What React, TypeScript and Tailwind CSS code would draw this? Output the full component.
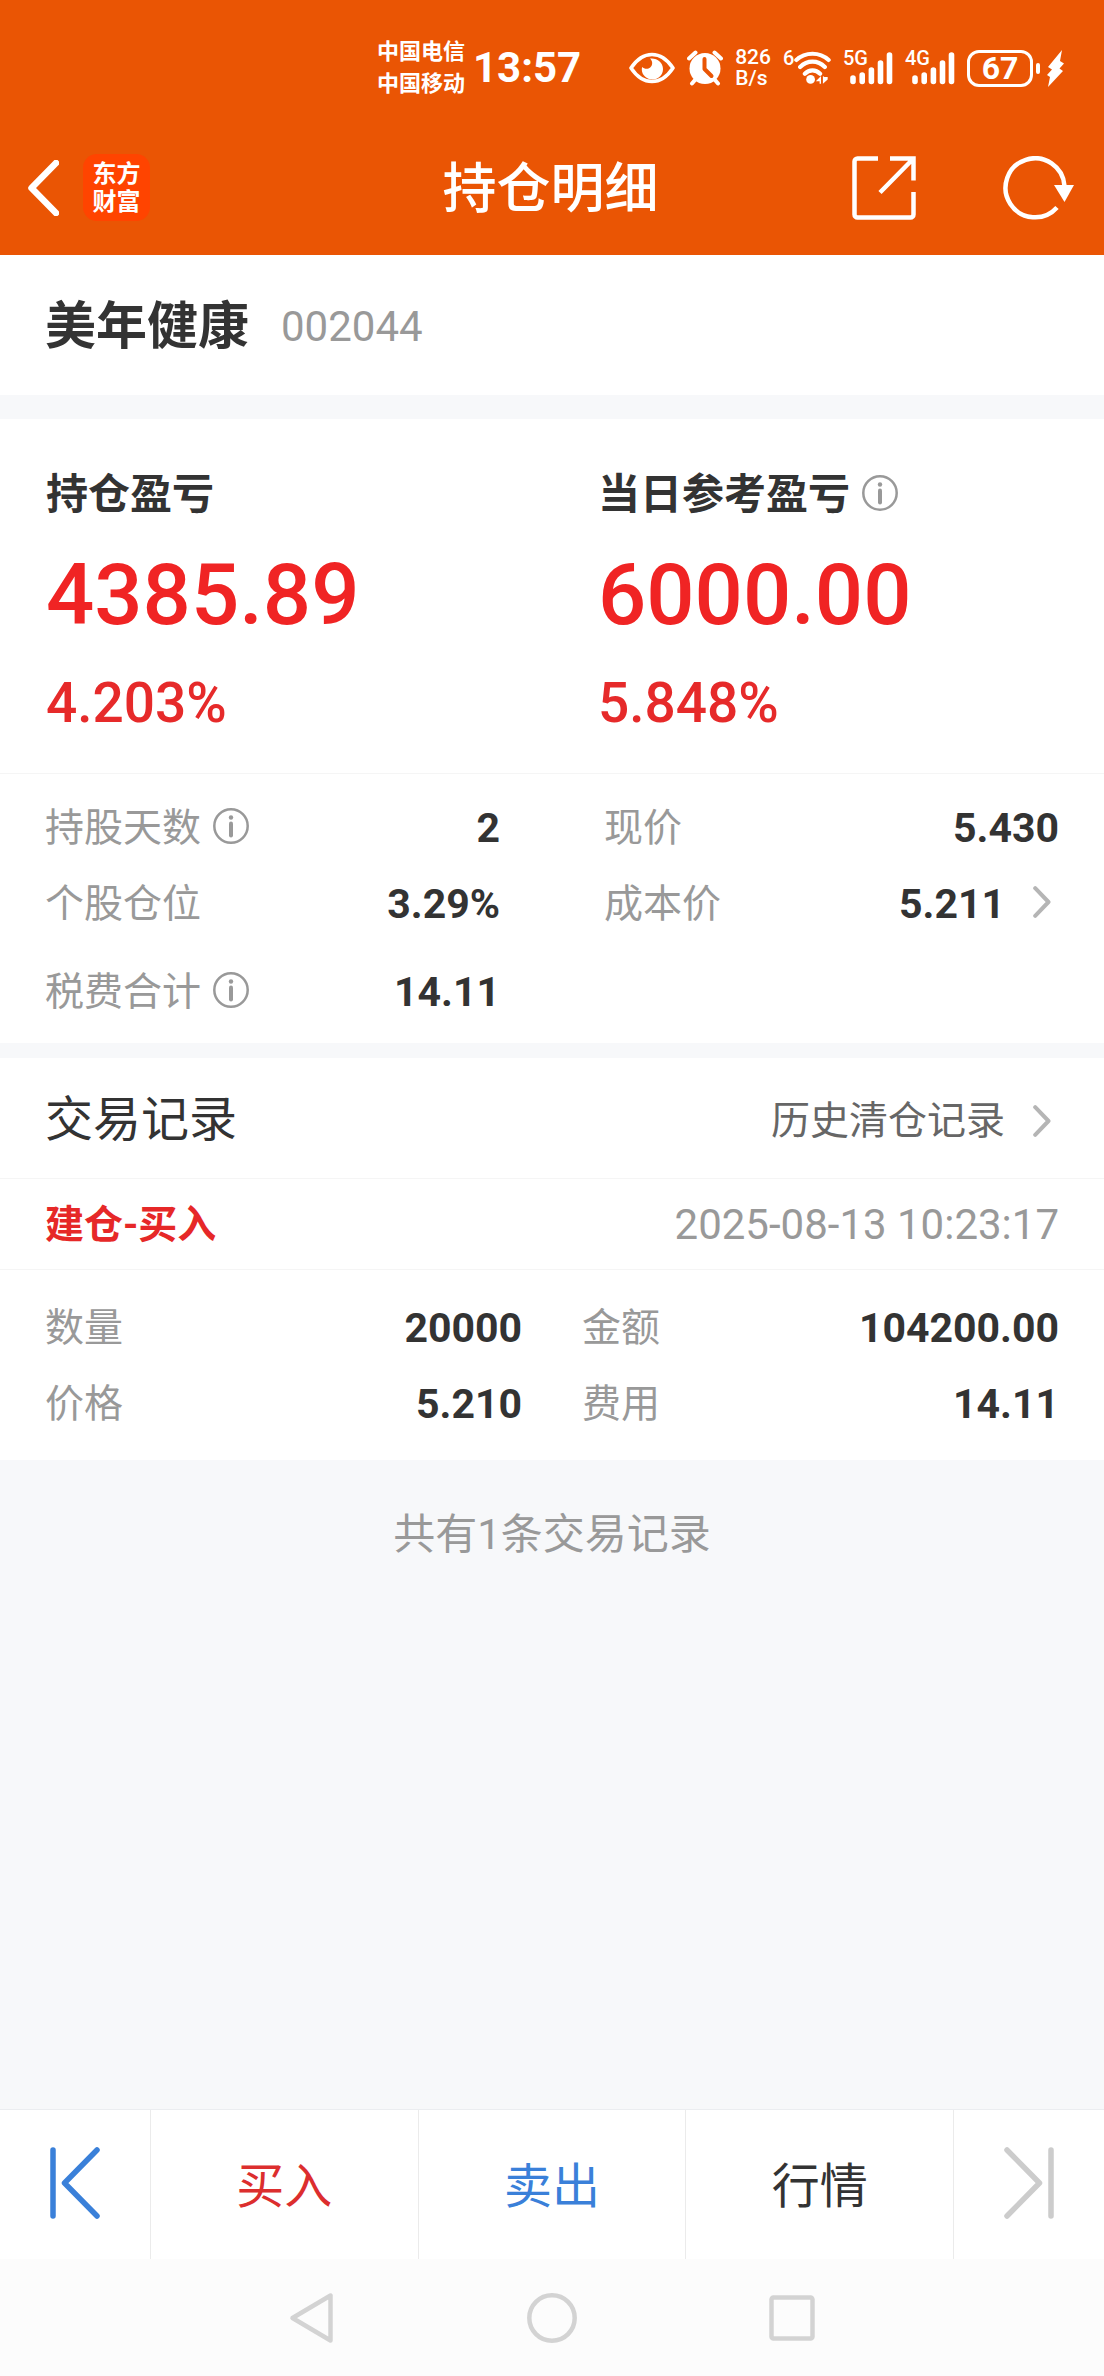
import type { ReactNode } from 'react';

const InfoIcon = () => (
  <svg className="mb-1" width="36" height="36" viewBox="0 0 36 36" fill="none">
    <circle cx="18" cy="18" r="16.7" stroke="#999" strokeWidth="2.5" />
    <circle cx="18" cy="9.5" r="2.2" fill="#999" />
    <path d="M18 15.5v12" stroke="#999" strokeWidth="4" strokeLinecap="round" />
  </svg>
);

const ChevronIcon = () => (
  <svg width="18" height="32" viewBox="0 0 18 32" fill="none">
    <path
      d="M2.2 2.2 15.5 16 2.2 29.8"
      stroke="#b5b5b5"
      strokeWidth="4"
      strokeLinecap="round"
      strokeLinejoin="round"
    />
  </svg>
);

const EyeIcon = () => (
  <svg width="46" height="32" viewBox="0 0 46 32" fill="none">
    <path
      d="M2 16C8 7 15 2.5 23 2.5S38 7 44 16C38 25 31 29.5 23 29.5S8 25 2 16z"
      stroke="#fff"
      strokeWidth="3.6"
      strokeLinejoin="round"
    />
    <path
      d="M21 6.5c7-.8 13 3.6 13 10.5 0 6-4.8 10.5-10.5 10.5S12.8 23 12.8 17.5c0-1 .1-1.8.4-2.6 1.8 2 5.6 2.6 8 .6 2.8-2.3 2.6-6.5-.2-9z"
      fill="#fff"
    />
  </svg>
);

const AlarmIcon = () => (
  <svg width="36" height="36" viewBox="0 0 36 36" fill="none">
    <circle cx="18" cy="18.5" r="15.5" fill="#fff" />
    <path
      d="M2 8.5 8.5 2.5M34 8.5 27.5 2.5M8 30l-3 3.5M28 30l3 3.5"
      stroke="#fff"
      strokeWidth="4"
      strokeLinecap="round"
    />
    <path
      d="M17.5 9v10l7 7"
      stroke="#ea5504"
      strokeWidth="4"
      strokeLinecap="round"
      strokeLinejoin="round"
    />
  </svg>
);

const WifiIcon = () => (
  <div className="relative w-12 h-9 pl-[10px]">
    <span className="absolute left-0 top-0 text-[20px] leading-4 font-medium">6</span>
    <svg width="38" height="36" viewBox="0 0 40 36" fill="none">
      <path
        d="M3.5 9.5C13 .8 28 .8 37.5 9.5M7.5 17C15 9.5 26 9.5 33.5 17M12.5 24c4.5-4.6 11.5-4.6 16 0"
        stroke="#fff"
        strokeWidth="4.4"
        strokeLinecap="round"
      />
      <circle cx="18.5" cy="30" r="4.6" fill="#fff" />
      <path d="M29.5 26.5v8H28V32h-4l5.5-5.5zM31.5 26.5v8l5-4.5v-2.5H33z" fill="#fff" />
    </svg>
  </div>
);

const SignalIcon = ({ type }: { type: string }) => (
  <div className="relative w-[50px] h-9 pl-[6px]">
    <span className="absolute left-0 top-0 text-[20px] leading-4 font-medium">{type}</span>
    <svg width="44" height="36" viewBox="0 0 44 36" stroke="#fff" strokeWidth="5.6" strokeLinecap="round">
      <path d="M4 28v3.5M13.2 25v6.5M22.4 20v11.5M31.5 13v18.5M40.5 5v26.5" />
    </svg>
  </div>
);

const Battery = () => (
  <div className="flex items-center">
    <div className="flex items-center justify-center w-[66px] h-[37px] border-3 border-white rounded-[12px] text-[32px] leading-8 font-bold">
      67
    </div>
    <div className="ml-[3px] w-1 h-[11px] rounded-sm bg-white"></div>
    <svg className="ml-[7px]" width="17" height="37" viewBox="0 0 17 37">
      <path d="M15 0 1 17l4 2.5L0 25l3 2-2 10L16 21l-3.500-2.500L17 13.500l-4-2.500z" fill="#fff" />
    </svg>
  </div>
);

const StatusBar = () => (
  <div className="flex items-center justify-end h-[120px] pt-4 pr-10">
    <div className="flex items-center gap-2 mr-12">
      <div className="text-[22px] leading-8 font-bold">
        <p>中国电信</p>
        <p>中国移动</p>
      </div>
      <span className="text-[42px] leading-12 font-bold">13:57</span>
    </div>
    <div className="flex items-center gap-3">
      <EyeIcon />
      <AlarmIcon />
      <div className="text-[21px] leading-[21px] font-medium">
        <p>826</p>
        <p>B/s</p>
      </div>
      <WifiIcon />
      <SignalIcon type="5G" />
      <SignalIcon type="4G" />
      <Battery />
    </div>
  </div>
);

const TitleBar = () => (
  <div className="grid grid-cols-[1fr_auto_1fr] items-center h-[135px] pl-[27px] pr-[30px]">
    <div className="flex items-center gap-6">
      <button aria-label="返回">
        <svg width="32" height="56" viewBox="0 0 32 56" fill="none">
          <path d="M29 3 4.5 28 29 53" stroke="#fff" strokeWidth="6.5" strokeLinejoin="round" strokeLinecap="round" />
        </svg>
      </button>
      <div className="flex flex-col items-center justify-center w-[67px] h-[67px] rounded-[14px] bg-[#ff4400] text-[24px] leading-7 font-bold">
        <span>东方</span>
        <span>财富</span>
      </div>
    </div>
    <h1 className="pt-1 text-[54px] leading-16 font-medium">持仓明细</h1>
    <div className="flex items-center justify-end gap-[87px]">
      <button aria-label="分享">
        <svg width="64" height="64" viewBox="0 0 64 64" fill="none" stroke="#fff" strokeWidth="4.5">
          <path d="M26 2.5H5.5a3 3 0 0 0-3 3v53a3 3 0 0 0 3 3h53a3 3 0 0 0 3-3V36" />
          <path d="M38 2.5h23.5V24.5M60 4 28 36.5" />
        </svg>
      </button>
      <button aria-label="刷新">
        <svg width="71" height="64" viewBox="0 0 71 64" fill="none">
          <path d="M61.5 30A29.5 29.5 0 1 0 54 51.5" stroke="#fff" strokeWidth="4.5" />
          <path d="M51 29h20l-9.5 17z" fill="#fff" />
        </svg>
      </button>
    </div>
  </div>
);

interface RowProps {
  label: string;
  value: string;
  info?: boolean;
  link?: boolean;
}

const Row = ({ label, value, info, link }: RowProps) => (
  <div className="flex items-center justify-between h-[76px] leading-12">
    <dt className="flex items-center gap-3 text-[39px] text-[#999]">
      {label}
      {info && <InfoIcon />}
    </dt>
    <dd className="flex items-center text-[41px] font-bold text-[#333]">
      {value}
      {link && (
        <button aria-label={label} className="ml-7 mr-2 mb-1">
          <ChevronIcon />
        </button>
      )}
    </dd>
  </div>
);

interface ProfitProps {
  title: string;
  amount: string;
  percent: string;
  info?: boolean;
}

const Profit = ({ title, amount, percent, info }: ProfitProps) => (
  <div className="px-[46px]">
    <h3 className="flex items-center gap-3 text-[42px] leading-12 font-bold">
      {title}
      {info && <InfoIcon />}
    </h3>
    <p className="mt-8 text-[85px] leading-22 font-medium text-[#f02424]">{amount}</p>
    <p className="mt-8 text-[55px] leading-16 font-medium text-[#e62a2a]">{percent}</p>
  </div>
);

const TabButton = ({ color, children }: { color: string; children: ReactNode }) => (
  <button className={`flex-1 pt-1 border-l border-[#ebebeb] text-[48px] ${color}`}>{children}</button>
);

const BottomBar = () => (
  <nav className="flex h-[150px] bg-white border-t border-[#ebedf0]">
    <button aria-label="上一只" className="flex items-center justify-center w-[150px] pb-1">
      <svg width="50" height="72" viewBox="0 0 50 72" fill="none">
        <path
          d="M3 3v66M47 3 14.5 36 47 69"
          stroke="#3a80d9"
          strokeWidth="5.5"
          strokeLinecap="round"
          strokeLinejoin="round"
        />
      </svg>
    </button>
    <TabButton color="text-[#dc2e2e]">买入</TabButton>
    <TabButton color="text-[#3a80d9]">卖出</TabButton>
    <TabButton color="text-[#333]">行情</TabButton>
    <button
      aria-label="下一只"
      className="flex items-center justify-center w-[151px] pb-1 border-l border-[#ebebeb]"
    >
      <svg width="50" height="72" viewBox="0 0 50 72" fill="none">
        <path
          d="M47 3v66M3 3l32.5 33L3 69"
          stroke="#ccc"
          strokeWidth="5.5"
          strokeLinecap="round"
          strokeLinejoin="round"
        />
      </svg>
    </button>
  </nav>
);

const SystemNav = () => (
  <div className="flex items-center justify-center gap-[190px] h-[117px] bg-[#fcfcfc]">
    <button aria-label="后退">
      <svg width="50" height="52" viewBox="0 0 50 52" fill="none">
        <path d="M43.5 3.5v45L5.5 26z" stroke="#d3d3d3" strokeWidth="4.5" strokeLinejoin="round" />
      </svg>
    </button>
    <button aria-label="主页">
      <svg width="50" height="50" viewBox="0 0 50 50" fill="none">
        <circle cx="25" cy="25" r="22.7" stroke="#d3d3d3" strokeWidth="4.5" />
      </svg>
    </button>
    <button aria-label="多任务">
      <svg width="50" height="50" viewBox="0 0 50 50" fill="none">
        <rect x="4.5" y="4.5" width="41" height="41" rx="2" stroke="#d3d3d3" strokeWidth="4.5" />
      </svg>
    </button>
  </div>
);

const App = () => {
  return (
    <div className="flex flex-col min-h-screen bg-[#f7f8fa] text-[#333] font-['Roboto','Noto_Sans_CJK_SC',sans-serif]">
      <header className="bg-[#ea5504] text-white">
        <StatusBar />
        <TitleBar />
      </header>

      <main className="flex-1">
        <section className="flex items-center gap-8 h-[140px] px-[45px] pt-1 bg-white">
          <h2 className="text-[51px] leading-16 font-bold">美年健康</h2>
          <span className="text-[42px] leading-12 text-[#999]">002044</span>
        </section>

        <section className="mt-6 bg-white">
          <div className="grid grid-cols-2 pt-[52px] pb-[38px] border-b border-[#f5f5f5]">
            <Profit title="持仓盈亏" amount="4385.89" percent="4.203%" />
            <Profit title="当日参考盈亏" amount="6000.00" percent="5.848%" info />
          </div>
          <div className="px-[45px] pt-4 pb-[13px]">
            <dl className="grid grid-cols-2 gap-x-26">
              <Row label="持股天数" value="2" info />
              <Row label="现价" value="5.430" />
              <Row label="个股仓位" value="3.29%" />
              <Row label="成本价" value="5.211" link />
            </dl>
            <dl className="grid grid-cols-2 gap-x-26 mt-3">
              <Row label="税费合计" value="14.11" info />
            </dl>
          </div>
        </section>

        <section className="mt-[15px] bg-white">
          <div className="flex items-center justify-between h-[121px] px-[45px] pt-1 border-b border-[#f5f5f5]">
            <h2 className="text-[48px] leading-16">交易记录</h2>
            <button className="flex items-center gap-7 pt-[2px] pr-2 text-[39px] leading-12 text-[#666]">
              历史清仓记录
              <ChevronIcon />
            </button>
          </div>
          <div className="flex items-center justify-between h-[91px] px-[45px] pt-[2px] border-b border-[#f5f5f5]">
            <h3 className="text-[39px] leading-12 font-bold text-[#e62828]">建仓-买入</h3>
            <time className="text-[42px] leading-12 text-[#999]">2025-08-13 10:23:17</time>
          </div>
          <dl className="grid grid-cols-2 gap-x-15 px-[45px] pt-5 pb-[18px]">
            <Row label="数量" value="20000" />
            <Row label="金额" value="104200.00" />
            <Row label="价格" value="5.210" />
            <Row label="费用" value="14.11" />
          </dl>
        </section>

        <p className="mt-[51px] text-center text-[42px] leading-12 text-[#999]">共有1条交易记录</p>
      </main>

      <footer>
        <BottomBar />
        <SystemNav />
      </footer>
    </div>
  );
};

export default App;
